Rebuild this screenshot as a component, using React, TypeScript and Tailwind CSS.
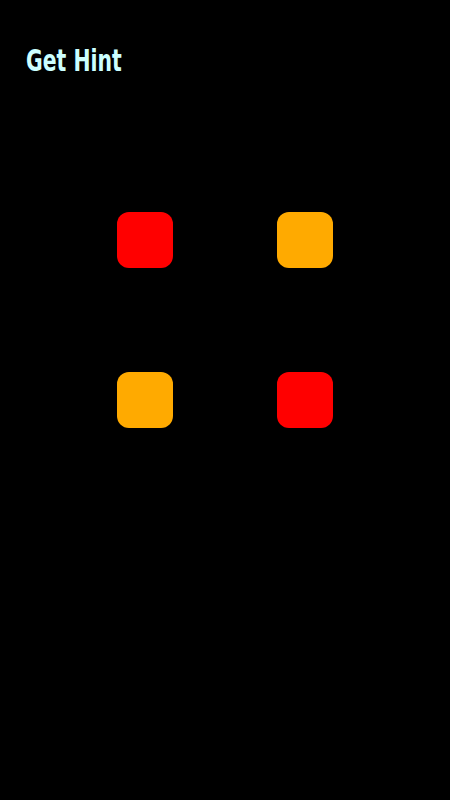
const tiles = ["bg-[#ff0000]", "bg-[#ffaa00]", "bg-[#ffaa00]", "bg-[#ff0000]"];

export default function App() {
  return (
    <div className="min-h-[800px] w-full bg-black">
      <div className="pl-[26px] pt-[44px]">
        <button className="origin-left scale-x-[0.68] font-['DejaVu_Sans',sans-serif] text-[30px] font-bold leading-[34px] text-[#ccffff]">
          Get Hint
        </button>
      </div>
      <div className="mt-[134px] flex justify-center">
        <div className="grid grid-cols-2 gap-x-[104px] gap-y-[104px]">
          {tiles.map((c, i) => (
            <div key={i} className={`h-[56px] w-[56px] rounded-[12px] ${c}`} />
          ))}
        </div>
      </div>
    </div>
  );
}
